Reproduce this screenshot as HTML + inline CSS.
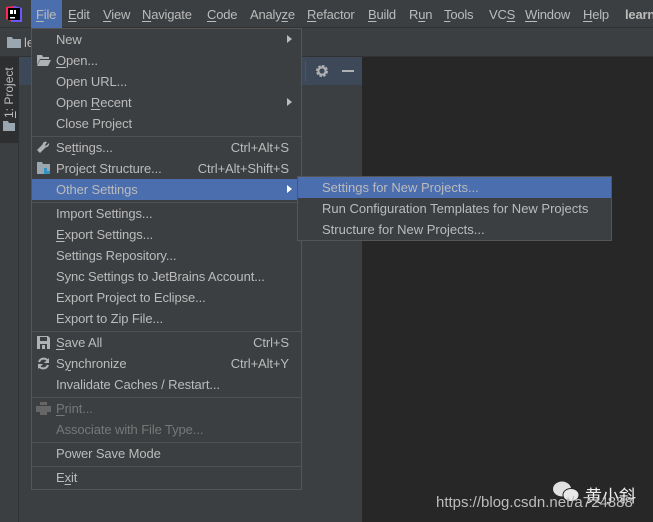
<!DOCTYPE html>
<html><head><meta charset="utf-8"><style>
*{margin:0;padding:0;box-sizing:border-box}
body{width:653px;height:522px;overflow:hidden;background:#3c3f41;font-family:"Liberation Sans","Noto Sans CJK SC",sans-serif;font-size:13px;color:#bbbbbb;position:relative}
.abs{position:absolute}
.u{text-decoration:underline;text-underline-offset:2px}
.menubar{left:0;top:0;width:653px;height:28px;background:#3c3f41;border-bottom:1px solid #323232;letter-spacing:-0.2px}
.mi{position:absolute;top:0;height:28px;line-height:29px}
.menu{left:31px;top:28px;width:271px;height:462px;background:#3c3f41;border:1px solid #555555;letter-spacing:-0.1px}
.it{position:absolute;left:0;width:269px;height:21px;line-height:21px;padding-left:24px}
.sc{position:absolute;right:12px;top:0}
.sep{position:absolute;left:0;width:269px;height:1px;background:#515151}
.arr{position:absolute;right:9px;top:6px;width:0;height:0;border-left:5px solid #bbbbbb;border-top:4.5px solid transparent;border-bottom:4.5px solid transparent}
.dis{color:#777777}
.sub{left:297px;top:176px;width:315px;height:65px;background:#3c3f41;border:1px solid #555555}
.sit{position:absolute;left:0;width:313px;height:21px;line-height:21px;padding-left:24px}
</style></head><body>
<div class="abs menubar">
  <svg class="abs" style="left:5px;top:5px" width="18" height="18" viewBox="0 0 18 18"><path d="M1 2 L9 1 L17 4 L17 16 L8 17 L1 14Z" fill="#fe2857"/><path d="M9 1 L17 3 L17 17 L6 17Z" fill="#6b57ff"/><rect x="3" y="3" width="12" height="12" fill="#000"/><rect x="5" y="5" width="3" height="4" fill="#fff"/><rect x="9" y="5" width="2" height="4" fill="#fff"/><rect x="5" y="12" width="5" height="1.5" fill="#fff"/></svg>
  <div class="mi" style="left:31px;width:31px;background:#4b6eaf;padding-left:5px"><span class="u">F</span>ile</div>
  <div class="mi" style="left:68px"><span class="u">E</span>dit</div>
  <div class="mi" style="left:103px"><span class="u">V</span>iew</div>
  <div class="mi" style="left:142px"><span class="u">N</span>avigate</div>
  <div class="mi" style="left:207px"><span class="u">C</span>ode</div>
  <div class="mi" style="left:250px">Analy<span class="u">z</span>e</div>
  <div class="mi" style="left:307px"><span class="u">R</span>efactor</div>
  <div class="mi" style="left:368px"><span class="u">B</span>uild</div>
  <div class="mi" style="left:409px">R<span class="u">u</span>n</div>
  <div class="mi" style="left:444px"><span class="u">T</span>ools</div>
  <div class="mi" style="left:489px">VC<span class="u">S</span></div>
  <div class="mi" style="left:525px"><span class="u">W</span>indow</div>
  <div class="mi" style="left:583px"><span class="u">H</span>elp</div>
  <div class="mi" style="left:625px;font-weight:bold">learn</div>
</div>
<div class="abs" style="left:0;top:29px;width:653px;height:28px;background:#3c3f41;border-bottom:1px solid #323232"></div>
<svg class="abs" style="left:7px;top:36px" width="14" height="12"><path d="M0 1h5l1 2h8v9H0z" fill="#9aa7b0"/></svg>
<div class="abs" style="left:24px;top:35px">le</div>
<div class="abs" style="left:0;top:57px;width:19px;height:465px;background:#3c3f41;border-right:1px solid #323232"></div>
<div class="abs" style="left:0;top:57px;width:19px;height:86px;background:#2d2f30"></div>
<div class="abs" style="left:2px;top:118px;transform:rotate(-90deg);transform-origin:left top;font-size:12px;white-space:nowrap"><span class="u">1</span>: Project</div>
<svg class="abs" style="left:3px;top:121px" width="12" height="10"><path d="M0 0h5l1 2h6v8H0z" fill="#9aa7b0"/></svg>
<div class="abs" style="left:19px;top:57px;width:343px;height:28px;background:#3d4858"></div>
<div class="abs" style="left:19px;top:85px;width:343px;height:437px;background:#3c3f41"></div>
<div class="abs" style="left:305px;top:61px;width:1px;height:20px;background:#555"></div>
<svg class="abs" style="left:315px;top:64px" width="14" height="14" viewBox="0 0 14 14"><circle cx="7" cy="7" r="4.5" fill="none" stroke="#afb1b3" stroke-width="3" stroke-dasharray="2.4 1.1"/><circle cx="7" cy="7" r="3.6" fill="none" stroke="#afb1b3" stroke-width="2"/></svg>
<div class="abs" style="left:342px;top:70px;width:12px;height:2px;background:#afb1b3"></div>
<div class="abs" style="left:362px;top:57px;width:291px;height:465px;background:#272727"></div>
<div class="abs menu">
  <div class="it" style="top:0">New<div class="arr"></div></div>
  <div class="it" style="top:21px"><svg class="abs" style="left:5px;top:5px" width="14" height="11"><path d="M0 0h5l1 2h6v2H3L0 10z M3 5h11l-3 6H0z" fill="#afb1b3"/></svg><span class="u">O</span>pen...</div>
  <div class="it" style="top:42px">Open URL...</div>
  <div class="it" style="top:63px">Open <span class="u">R</span>ecent<div class="arr"></div></div>
  <div class="it" style="top:84px">Close Project</div>
  <div class="sep" style="top:107px"></div>
  <div class="it" style="top:108px"><svg class="abs" style="left:5px;top:4px" width="13" height="13"><path d="M12 2 9 5 8 4 10 1C8 0 6 1 5.5 3.5L0 9l3 3 5.5-5.5C11 6 12.5 4.5 12 2z" fill="#afb1b3"/></svg>Se<span class="u">t</span>tings...<span class="sc">Ctrl+Alt+S</span></div>
  <div class="it" style="top:129px"><svg class="abs" style="left:5px;top:4px" width="14" height="13"><path d="M0 0h5l1 2h7v10H0z" fill="#9aa7b0"/><rect x="7" y="6" width="3" height="3" fill="#3592c4"/><rect x="10" y="9" width="3" height="3" fill="#3592c4"/><rect x="7" y="9" width="3" height="3" fill="#3592c4"/></svg>Project Structure...<span class="sc">Ctrl+Alt+Shift+S</span></div>
  <div class="it" style="top:150px;background:#4b6eaf">Other Settings<div class="arr" style="border-left-color:#fff"></div></div>
  <div class="sep" style="top:173px"></div>
  <div class="it" style="top:174px">Import Settings...</div>
  <div class="it" style="top:195px"><span class="u">E</span>xport Settings...</div>
  <div class="it" style="top:216px">Settings Repository...</div>
  <div class="it" style="top:237px">Sync Settings to JetBrains Account...</div>
  <div class="it" style="top:258px">Export Project to Eclipse...</div>
  <div class="it" style="top:279px">Export to Zip File...</div>
  <div class="sep" style="top:302px"></div>
  <div class="it" style="top:303px"><svg class="abs" style="left:5px;top:4px" width="13" height="13"><path d="M0 0h11l2 2v11H0z" fill="#afb1b3"/><rect x="3" y="1" width="7" height="4" fill="#3c3f41"/><rect x="3" y="8" width="7" height="5" fill="#3c3f41"/><rect x="5" y="9" width="3" height="4" fill="#afb1b3"/></svg><span class="u">S</span>ave All<span class="sc">Ctrl+S</span></div>
  <div class="it" style="top:324px"><svg class="abs" style="left:5px;top:4px" width="13" height="13" viewBox="0 0 13 13"><path d="M2 5A5 5 0 0 1 11 4" fill="none" stroke="#afb1b3" stroke-width="2"/><path d="M11 8A5 5 0 0 1 2 9" fill="none" stroke="#afb1b3" stroke-width="2"/><path d="M12 1v5H7z" fill="#afb1b3"/><path d="M1 12V7h5z" fill="#afb1b3"/></svg>S<span class="u">y</span>nchronize<span class="sc">Ctrl+Alt+Y</span></div>
  <div class="it" style="top:345px">Invalidate Caches / Restart...</div>
  <div class="sep" style="top:368px"></div>
  <div class="it dis" style="top:369px"><svg class="abs" style="left:4px;top:4px" width="15" height="13"><rect x="4" y="0" width="7" height="3" fill="#666"/><rect x="0" y="4" width="15" height="6" fill="#666"/><rect x="4" y="8" width="7" height="5" fill="#666"/></svg><span class="u">P</span>rint...</div>
  <div class="it dis" style="top:390px">Associate with File Type...</div>
  <div class="sep" style="top:413px"></div>
  <div class="it" style="top:414px">Power Save Mode</div>
  <div class="sep" style="top:437px"></div>
  <div class="it" style="top:438px">E<span class="u">x</span>it</div>
</div>
<div class="abs sub">
  <div class="sit" style="top:0;background:#4b6eaf">Settings for New Projects...</div>
  <div class="sit" style="top:21px">Run Configuration Templates for New Projects</div>
  <div class="sit" style="top:42px">Structure for New Projects...</div>
</div>
<svg class="abs" style="left:552px;top:481px" width="28" height="22"><ellipse cx="10" cy="8" rx="9" ry="7.5" fill="#e0e0e0"/><ellipse cx="19" cy="14" rx="8" ry="6.5" fill="#e8e8e8" stroke="#272727" stroke-width="1"/></svg>
<div class="abs" style="left:585px;top:482px;font-size:17px;color:#eeeeee">黄小斜</div>
<div class="abs" style="left:436px;top:494px;font-size:15px;color:#bdbdbd">https://blog.csdn.net/a724888</div>
</body></html>
